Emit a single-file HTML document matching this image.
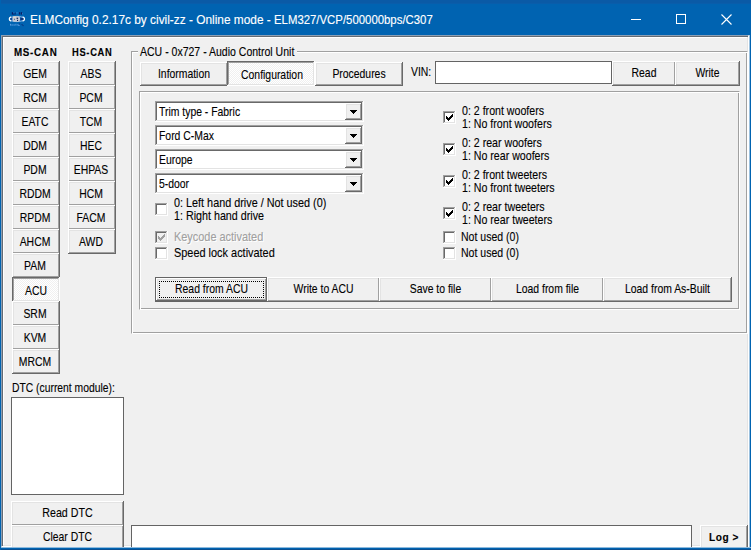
<!DOCTYPE html>
<html><head><meta charset="utf-8"><title>ELMConfig</title>
<style>
html,body{margin:0;padding:0}
body{width:751px;height:550px;overflow:hidden;position:relative;background:#F0F0F0;font-family:"Liberation Sans",sans-serif;color:#000}
.abs,.t,.btn,.etched,.sunken,.edit,.list,.focus{position:absolute;box-sizing:border-box}
.t{white-space:nowrap;display:block;-webkit-text-stroke:.12px currentColor}
.titlebar{position:absolute;left:0;top:0;width:751px;height:35px;background:#0063B1}
.topshade{position:absolute;left:0;top:0;width:751px;height:4px;background:linear-gradient(#0A5AA6,#0A5AA6 3px,#0860AE 4px)}
.client{position:absolute;left:1px;top:35px;width:748px;height:512px;box-sizing:border-box;background:#F0F0F0;border:1px solid;border-color:#8C9FB4 #fff #fff #8C9FB4;box-shadow:inset 1px 1px 0 #646B73, inset -1px -1px 0 #E3E3E3, inset 2px 2px 0 #fff}
.e{position:absolute;background:linear-gradient(var(--f),var(--f)) 2px 2px/calc(100% - 4px) calc(100% - 4px) no-repeat,linear-gradient(var(--t2),var(--t2)) 1px 1px/calc(100% - 3px) calc(100% - 3px) no-repeat,linear-gradient(var(--b2),var(--b2)) 1px 1px/calc(100% - 2px) calc(100% - 2px) no-repeat,linear-gradient(var(--t1),var(--t1)) 0 0/calc(100% - 1px) calc(100% - 1px) no-repeat,var(--b1)}
.raised{--f:#F0F0F0;--t1:#FFFFFF;--t2:#E3E3E3;--b1:#696969;--b2:#A0A0A0}
.pressed{--f:#F8F8F8;--t1:#696969;--t2:#A0A0A0;--b1:#FFFFFF;--b2:#E3E3E3}
.sunken{--f:#fff;--t1:#A0A0A0;--t2:#696969;--b1:#FFFFFF;--b2:#E3E3E3}
.sunken.dis{--f:#F0F0F0}
.focus{border:1px dotted #000}
.chk{background:conic-gradient(#F0F0F0 0 25%,#fff 0 50%,#F0F0F0 0 75%,#fff 0) 0 0/2px 2px}
.etched{border:1px solid;border-color:#A0A0A0 #FFFFFF #FFFFFF #A0A0A0;box-shadow:inset 1px 1px 0 #FFFFFF, inset -1px -1px 0 #A0A0A0}
.edit{background:#fff;border:1px solid #646464}
.list{background:#fff;border:1px solid #646464}
.frame-b{position:absolute;left:0;top:547px;width:751px;height:3px;background:linear-gradient(#8FBADD 0,#8FBADD 1px,#0063B1 1px)}
.frame-b2{position:absolute;left:0;top:549px;width:751px;height:1px;background:#0A4E90}
.frame-l{position:absolute;left:0;top:0;width:1px;height:550px;background:#0063B1}
.frame-r{position:absolute;left:749px;top:35px;width:2px;height:512px;background:linear-gradient(90deg,#9CC2E0 0,#9CC2E0 1px,#0063B1 1px)}
</style></head>
<body>
<div class="titlebar"></div>
<div class="topshade"></div>
<svg class="abs" style="left:8px;top:10px" width="18" height="18" viewBox="0 0 18 18">
<g fill="#0B1F66"><rect x="3.8" y="2.2" width="1.5" height="2.4"/><rect x="6.6" y="2.6" width="1" height="2"/><rect x="10.9" y="2.2" width="1.3" height="2.4"/><rect x="12.8" y="2.2" width="1.3" height="2.4"/><rect x="5.3" y="3.9" width="1" height=".8"/></g>
<g fill="#3C86D4" opacity=".8"><rect x="5.4" y="2.2" width="1" height="1"/><rect x="8" y="2.4" width="2.4" height="1"/><rect x="14.2" y="3" width=".8" height="1.4"/></g>
<ellipse cx="8.9" cy="9" rx="7.6" ry="2.6" fill="#0E5AAE" stroke="#8FBDEA" stroke-width=".9"/>
<path d="M3.2 6.9C.6 7.6.6 10.4 3.2 11.1M14.6 6.9c2.6.7 2.6 3.500 0 4.200" fill="none" stroke="#fff" stroke-width="1.2"/>
<rect x="4.4" y="6.3" width="7.6" height="5.4" rx="1.6" fill="#C4CAD4"/>
<rect x="5" y="6.6" width="3" height="1.2" fill="#EADCC8" opacity=".8"/>
<g fill="#101E58"><rect x="8.6" y="7.7" width="1.5" height="1.2"/><rect x="9" y="9.8" width="1.1" height="1.2"/><rect x="6" y="8.8" width="1" height=".9" opacity=".7"/><rect x="12.6" y="8.4" width="2.8" height="1.2"/><rect x="2.3" y="8.6" width="1.6" height=".8" opacity=".6"/></g>
<g fill="#5A9EE0"><rect x="2" y="13.8" width="1" height="1.8"/><rect x="3.4" y="14.4" width="1.4" height="1.2"/><rect x="5.4" y="14.4" width="1.4" height="1.2"/><rect x="7.4" y="13.8" width=".9" height="1.8"/><rect x="8.8" y="14" width=".8" height="1.6"/><rect x="10.2" y="14.4" width="1.4" height="1.6"/></g>
<g fill="#0B1F66"><rect x="11.2" y="13.6" width=".9" height=".9"/><rect x="13.6" y="14.2" width=".9" height=".9"/><rect x="14.6" y="15.2" width=".9" height=".9"/></g>
</svg>
<span class="t " style="left:30px;top:13px;font-size:12px;line-height:14px;transform:scaleX(0.989);transform-origin:0 0;color:#fff;">ELMConfig 0.2.17c by civil-zz - Online mode -</span>
<span class="t " style="left:274px;top:13px;font-size:12px;line-height:14px;transform:scaleX(0.948);transform-origin:0 0;color:#fff;">ELM327/VCP/500000bps/C307</span>
<svg class="abs" style="left:626px;top:9px" width="20" height="20" viewBox="0 0 20 20"><path d="M5 10.5h10" stroke="#fff" stroke-width="1"/></svg>
<svg class="abs" style="left:671px;top:9px" width="20" height="20" viewBox="0 0 20 20"><rect x="5.5" y="5.5" width="9" height="9" fill="none" stroke="#fff" stroke-width="1"/></svg>
<svg class="abs" style="left:716px;top:9px" width="20" height="20" viewBox="0 0 20 20"><path d="M5.5 5.5l10 10M15.5 5.5l-10 10" stroke="#fff" stroke-width="1.1"/></svg>
<div class="client"></div>
<span class="t " style="left:13.5px;top:46px;font-size:11px;line-height:13px;transform:scaleX(0.89);transform-origin:0 0;font-weight:bold;letter-spacing:.8px;">MS-CAN</span>
<span class="t " style="left:71.5px;top:46px;font-size:11px;line-height:13px;transform:scaleX(0.85);transform-origin:0 0;font-weight:bold;letter-spacing:.8px;">HS-CAN</span>
<div class="e raised" style="left:12px;top:61px;width:48px;height:25px"></div>
<span class="t" style="left:11px;width:48px;top:66px;font-size:13px;line-height:15px;text-align:center;transform:scaleX(0.8);transform-origin:50% 0;">GEM</span>
<div class="e raised" style="left:12px;top:85px;width:48px;height:25px"></div>
<span class="t" style="left:11px;width:48px;top:90px;font-size:13px;line-height:15px;text-align:center;transform:scaleX(0.8);transform-origin:50% 0;">RCM</span>
<div class="e raised" style="left:12px;top:109px;width:48px;height:25px"></div>
<span class="t" style="left:11px;width:48px;top:114px;font-size:13px;line-height:15px;text-align:center;transform:scaleX(0.8);transform-origin:50% 0;">EATC</span>
<div class="e raised" style="left:12px;top:133px;width:48px;height:25px"></div>
<span class="t" style="left:11px;width:48px;top:138px;font-size:13px;line-height:15px;text-align:center;transform:scaleX(0.8);transform-origin:50% 0;">DDM</span>
<div class="e raised" style="left:12px;top:157px;width:48px;height:25px"></div>
<span class="t" style="left:11px;width:48px;top:162px;font-size:13px;line-height:15px;text-align:center;transform:scaleX(0.8);transform-origin:50% 0;">PDM</span>
<div class="e raised" style="left:12px;top:181px;width:48px;height:25px"></div>
<span class="t" style="left:11px;width:48px;top:186px;font-size:13px;line-height:15px;text-align:center;transform:scaleX(0.8);transform-origin:50% 0;">RDDM</span>
<div class="e raised" style="left:12px;top:205px;width:48px;height:25px"></div>
<span class="t" style="left:11px;width:48px;top:210px;font-size:13px;line-height:15px;text-align:center;transform:scaleX(0.8);transform-origin:50% 0;">RPDM</span>
<div class="e raised" style="left:12px;top:229px;width:48px;height:25px"></div>
<span class="t" style="left:11px;width:48px;top:234px;font-size:13px;line-height:15px;text-align:center;transform:scaleX(0.8);transform-origin:50% 0;">AHCM</span>
<div class="e raised" style="left:12px;top:253px;width:48px;height:25px"></div>
<span class="t" style="left:11px;width:48px;top:258px;font-size:13px;line-height:15px;text-align:center;transform:scaleX(0.8);transform-origin:50% 0;">PAM</span>
<div class="e pressed" style="left:12px;top:277px;width:48px;height:25px"></div>
<div class="abs chk" style="left:14px;top:279px;width:44px;height:21px"></div>
<span class="t" style="left:12px;width:48px;top:283px;font-size:13px;line-height:15px;text-align:center;transform:scaleX(0.8);transform-origin:50% 0;">ACU</span>
<div class="e raised" style="left:12px;top:301px;width:48px;height:25px"></div>
<span class="t" style="left:11px;width:48px;top:306px;font-size:13px;line-height:15px;text-align:center;transform:scaleX(0.8);transform-origin:50% 0;">SRM</span>
<div class="e raised" style="left:12px;top:325px;width:48px;height:25px"></div>
<span class="t" style="left:11px;width:48px;top:330px;font-size:13px;line-height:15px;text-align:center;transform:scaleX(0.8);transform-origin:50% 0;">KVM</span>
<div class="e raised" style="left:12px;top:349px;width:48px;height:25px"></div>
<span class="t" style="left:11px;width:48px;top:354px;font-size:13px;line-height:15px;text-align:center;transform:scaleX(0.8);transform-origin:50% 0;">MRCM</span>
<div class="e raised" style="left:68px;top:61px;width:48px;height:25px"></div>
<span class="t" style="left:67px;width:48px;top:66px;font-size:13px;line-height:15px;text-align:center;transform:scaleX(0.8);transform-origin:50% 0;">ABS</span>
<div class="e raised" style="left:68px;top:85px;width:48px;height:25px"></div>
<span class="t" style="left:67px;width:48px;top:90px;font-size:13px;line-height:15px;text-align:center;transform:scaleX(0.8);transform-origin:50% 0;">PCM</span>
<div class="e raised" style="left:68px;top:109px;width:48px;height:25px"></div>
<span class="t" style="left:67px;width:48px;top:114px;font-size:13px;line-height:15px;text-align:center;transform:scaleX(0.8);transform-origin:50% 0;">TCM</span>
<div class="e raised" style="left:68px;top:133px;width:48px;height:25px"></div>
<span class="t" style="left:67px;width:48px;top:138px;font-size:13px;line-height:15px;text-align:center;transform:scaleX(0.8);transform-origin:50% 0;">HEC</span>
<div class="e raised" style="left:68px;top:157px;width:48px;height:25px"></div>
<span class="t" style="left:67px;width:48px;top:162px;font-size:13px;line-height:15px;text-align:center;transform:scaleX(0.8);transform-origin:50% 0;">EHPAS</span>
<div class="e raised" style="left:68px;top:181px;width:48px;height:25px"></div>
<span class="t" style="left:67px;width:48px;top:186px;font-size:13px;line-height:15px;text-align:center;transform:scaleX(0.8);transform-origin:50% 0;">HCM</span>
<div class="e raised" style="left:68px;top:205px;width:48px;height:25px"></div>
<span class="t" style="left:67px;width:48px;top:210px;font-size:13px;line-height:15px;text-align:center;transform:scaleX(0.8);transform-origin:50% 0;">FACM</span>
<div class="e raised" style="left:68px;top:229px;width:48px;height:25px"></div>
<span class="t" style="left:67px;width:48px;top:234px;font-size:13px;line-height:15px;text-align:center;transform:scaleX(0.8);transform-origin:50% 0;">AWD</span>
<span class="t " style="left:11.5px;top:380px;font-size:13px;line-height:15px;transform:scaleX(0.795);transform-origin:0 0;">DTC (current module):</span>
<div class="list" style="left:11px;top:397px;width:113px;height:98px"></div>
<div class="e raised" style="left:11px;top:501px;width:113px;height:25px"></div>
<span class="t" style="left:11px;width:113px;top:505px;font-size:13px;line-height:15px;text-align:center;transform:scaleX(0.82);transform-origin:50% 0;">Read DTC</span>
<div class="e raised" style="left:11px;top:525px;width:113px;height:25px"></div>
<span class="t" style="left:11px;width:113px;top:529px;font-size:13px;line-height:15px;text-align:center;transform:scaleX(0.8);transform-origin:50% 0;">Clear DTC</span>
<div class="etched" style="left:131px;top:51px;width:617px;height:283px"></div>
<div class="abs" style="left:138px;top:46px;width:159px;height:12px;background:#F0F0F0"></div>
<span class="t " style="left:140px;top:44px;font-size:13px;line-height:15px;transform:scaleX(0.809);transform-origin:0 0;">ACU - 0x727 - Audio Control Unit</span>
<div class="e raised" style="left:140px;top:62px;width:88px;height:24px"></div>
<span class="t" style="left:139.5px;width:88px;top:66px;font-size:13px;line-height:15px;text-align:center;transform:scaleX(0.8);transform-origin:50% 0;">Information</span>
<div class="e pressed" style="left:227px;top:61px;width:88px;height:25px"></div>
<div class="abs chk" style="left:229px;top:63px;width:84px;height:21px"></div>
<span class="t" style="left:228px;width:88px;top:67px;font-size:13px;line-height:15px;text-align:center;transform:scaleX(0.8);transform-origin:50% 0;">Configuration</span>
<div class="e raised" style="left:315px;top:62px;width:88px;height:24px"></div>
<span class="t" style="left:315px;width:88px;top:66px;font-size:13px;line-height:15px;text-align:center;transform:scaleX(0.8);transform-origin:50% 0;">Procedures</span>
<span class="t " style="left:411px;top:64px;font-size:13px;line-height:15px;transform:scaleX(0.8);transform-origin:0 0;">VIN:</span>
<div class="edit" style="left:435px;top:61px;width:177px;height:23px"></div>
<div class="e raised" style="left:612px;top:61px;width:64px;height:25px"></div>
<span class="t" style="left:611.5px;width:64px;top:65px;font-size:13px;line-height:15px;text-align:center;transform:scaleX(0.8);transform-origin:50% 0;">Read</span>
<div class="e raised" style="left:675px;top:61px;width:65px;height:25px"></div>
<span class="t" style="left:675px;width:65px;top:65px;font-size:13px;line-height:15px;text-align:center;transform:scaleX(0.8);transform-origin:50% 0;">Write</span>
<div class="etched" style="left:139px;top:91px;width:601px;height:219px"></div>
<div class="e sunken" style="left:155px;top:101px;width:209px;height:21px"></div>
<div class="e raised" style="left:345px;top:103px;width:17px;height:17px"></div>
<svg class="abs" style="left:350px;top:110px" width="7" height="4" viewBox="0 0 7 4"><path shape-rendering="crispEdges" d="M0 0h7v1h-7zM1 1h5v1h-5zM2 2h3v1h-3zM3 3h1v1h-1z" fill="#000"/></svg>
<span class="t " style="left:159px;top:104px;font-size:13px;line-height:15px;transform:scaleX(0.8);transform-origin:0 0;">Trim type - Fabric</span>
<div class="e sunken" style="left:155px;top:125px;width:209px;height:21px"></div>
<div class="e raised" style="left:345px;top:127px;width:17px;height:17px"></div>
<svg class="abs" style="left:350px;top:134px" width="7" height="4" viewBox="0 0 7 4"><path shape-rendering="crispEdges" d="M0 0h7v1h-7zM1 1h5v1h-5zM2 2h3v1h-3zM3 3h1v1h-1z" fill="#000"/></svg>
<span class="t " style="left:159px;top:128px;font-size:13px;line-height:15px;transform:scaleX(0.8);transform-origin:0 0;">Ford C-Max</span>
<div class="e sunken" style="left:155px;top:149px;width:209px;height:21px"></div>
<div class="e raised" style="left:345px;top:151px;width:17px;height:17px"></div>
<svg class="abs" style="left:350px;top:158px" width="7" height="4" viewBox="0 0 7 4"><path shape-rendering="crispEdges" d="M0 0h7v1h-7zM1 1h5v1h-5zM2 2h3v1h-3zM3 3h1v1h-1z" fill="#000"/></svg>
<span class="t " style="left:159px;top:152px;font-size:13px;line-height:15px;transform:scaleX(0.8);transform-origin:0 0;">Europe</span>
<div class="e sunken" style="left:155px;top:173px;width:209px;height:21px"></div>
<div class="e raised" style="left:345px;top:175px;width:17px;height:17px"></div>
<svg class="abs" style="left:350px;top:182px" width="7" height="4" viewBox="0 0 7 4"><path shape-rendering="crispEdges" d="M0 0h7v1h-7zM1 1h5v1h-5zM2 2h3v1h-3zM3 3h1v1h-1z" fill="#000"/></svg>
<span class="t " style="left:159px;top:176px;font-size:13px;line-height:15px;transform:scaleX(0.8);transform-origin:0 0;">5-door</span>
<div class="e sunken" style="left:155px;top:203px;width:13px;height:13px"></div>
<span class="t " style="left:174px;top:195px;font-size:13px;line-height:15px;transform:scaleX(0.833);transform-origin:0 0;">0: Left hand drive / Not used (0)</span>
<span class="t " style="left:174px;top:208px;font-size:13px;line-height:15px;transform:scaleX(0.825);transform-origin:0 0;">1: Right hand drive</span>
<div class="e sunken dis" style="left:155px;top:231px;width:13px;height:13px"></div>
<svg class="abs" style="left:158px;top:234px" width="7" height="7" viewBox="0 0 7 7"><path shape-rendering="crispEdges" d="M0 2h1v3h-1zM1 3h1v3h-1zM2 4h1v3h-1zM3 3h1v3h-1zM4 2h1v3h-1zM5 1h1v3h-1zM6 0h1v3h-1z" fill="#A0A0A0"/></svg>
<span class="t " style="left:174.5px;top:230px;font-size:13px;line-height:15px;transform:scaleX(0.84);transform-origin:0 0;color:#fff;">Keycode activated</span>
<span class="t " style="left:173.5px;top:229px;font-size:13px;line-height:15px;transform:scaleX(0.84);transform-origin:0 0;color:#A0A0A0;">Keycode activated</span>
<div class="e sunken" style="left:155px;top:247px;width:13px;height:13px"></div>
<span class="t " style="left:173.5px;top:245px;font-size:13px;line-height:15px;transform:scaleX(0.84);transform-origin:0 0;">Speed lock activated</span>
<div class="e sunken" style="left:443px;top:111px;width:13px;height:13px"></div>
<svg class="abs" style="left:446px;top:114px" width="7" height="7" viewBox="0 0 7 7"><path shape-rendering="crispEdges" d="M0 2h1v3h-1zM1 3h1v3h-1zM2 4h1v3h-1zM3 3h1v3h-1zM4 2h1v3h-1zM5 1h1v3h-1zM6 0h1v3h-1z" fill="#000"/></svg>
<span class="t " style="left:461.5px;top:103px;font-size:13px;line-height:15px;transform:scaleX(0.817);transform-origin:0 0;">0: 2 front woofers</span>
<span class="t " style="left:461.5px;top:116px;font-size:13px;line-height:15px;transform:scaleX(0.817);transform-origin:0 0;">1: No front woofers</span>
<div class="e sunken" style="left:443px;top:143px;width:13px;height:13px"></div>
<svg class="abs" style="left:446px;top:146px" width="7" height="7" viewBox="0 0 7 7"><path shape-rendering="crispEdges" d="M0 2h1v3h-1zM1 3h1v3h-1zM2 4h1v3h-1zM3 3h1v3h-1zM4 2h1v3h-1zM5 1h1v3h-1zM6 0h1v3h-1z" fill="#000"/></svg>
<span class="t " style="left:461.5px;top:135px;font-size:13px;line-height:15px;transform:scaleX(0.817);transform-origin:0 0;">0: 2 rear woofers</span>
<span class="t " style="left:461.5px;top:148px;font-size:13px;line-height:15px;transform:scaleX(0.817);transform-origin:0 0;">1: No rear woofers</span>
<div class="e sunken" style="left:443px;top:175px;width:13px;height:13px"></div>
<svg class="abs" style="left:446px;top:178px" width="7" height="7" viewBox="0 0 7 7"><path shape-rendering="crispEdges" d="M0 2h1v3h-1zM1 3h1v3h-1zM2 4h1v3h-1zM3 3h1v3h-1zM4 2h1v3h-1zM5 1h1v3h-1zM6 0h1v3h-1z" fill="#000"/></svg>
<span class="t " style="left:461.5px;top:167px;font-size:13px;line-height:15px;transform:scaleX(0.817);transform-origin:0 0;">0: 2 front tweeters</span>
<span class="t " style="left:461.5px;top:180px;font-size:13px;line-height:15px;transform:scaleX(0.817);transform-origin:0 0;">1: No front tweeters</span>
<div class="e sunken" style="left:443px;top:207px;width:13px;height:13px"></div>
<svg class="abs" style="left:446px;top:210px" width="7" height="7" viewBox="0 0 7 7"><path shape-rendering="crispEdges" d="M0 2h1v3h-1zM1 3h1v3h-1zM2 4h1v3h-1zM3 3h1v3h-1zM4 2h1v3h-1zM5 1h1v3h-1zM6 0h1v3h-1z" fill="#000"/></svg>
<span class="t " style="left:461.5px;top:199px;font-size:13px;line-height:15px;transform:scaleX(0.817);transform-origin:0 0;">0: 2 rear tweeters</span>
<span class="t " style="left:461.5px;top:212px;font-size:13px;line-height:15px;transform:scaleX(0.817);transform-origin:0 0;">1: No rear tweeters</span>
<div class="e sunken" style="left:443px;top:231px;width:13px;height:13px"></div>
<span class="t " style="left:461px;top:229px;font-size:13px;line-height:15px;transform:scaleX(0.81);transform-origin:0 0;">Not used (0)</span>
<div class="e sunken" style="left:443px;top:247px;width:13px;height:13px"></div>
<span class="t " style="left:461px;top:245px;font-size:13px;line-height:15px;transform:scaleX(0.81);transform-origin:0 0;">Not used (0)</span>
<div class="abs" style="left:155px;top:277px;width:113px;height:25px;background:#646464"></div>
<div class="e raised" style="left:156px;top:278px;width:111px;height:23px"></div>
<div class="focus" style="left:159px;top:281px;width:105px;height:17px"></div>
<span class="t" style="left:155px;width:113px;top:281px;font-size:13px;line-height:15px;text-align:center;transform:scaleX(0.8);transform-origin:50% 0;">Read from ACU</span>
<div class="e raised" style="left:267px;top:277px;width:113px;height:25px"></div>
<span class="t" style="left:267px;width:113px;top:281px;font-size:13px;line-height:15px;text-align:center;transform:scaleX(0.8);transform-origin:50% 0;">Write to ACU</span>
<div class="e raised" style="left:379px;top:277px;width:113px;height:25px"></div>
<span class="t" style="left:379px;width:113px;top:281px;font-size:13px;line-height:15px;text-align:center;transform:scaleX(0.8);transform-origin:50% 0;">Save to file</span>
<div class="e raised" style="left:491px;top:277px;width:113px;height:25px"></div>
<span class="t" style="left:491px;width:113px;top:281px;font-size:13px;line-height:15px;text-align:center;transform:scaleX(0.8);transform-origin:50% 0;">Load from file</span>
<div class="e raised" style="left:603px;top:277px;width:129px;height:25px"></div>
<span class="t" style="left:603px;width:129px;top:281px;font-size:13px;line-height:15px;text-align:center;transform:scaleX(0.8);transform-origin:50% 0;">Load from As-Built</span>
<div class="edit" style="left:131px;top:525px;width:561px;height:24px"></div>
<div class="e raised" style="left:700px;top:525px;width:48px;height:25px"></div>
<span class="t" style="left:699.5px;width:48px;top:531px;font-size:11px;line-height:13px;text-align:center;transform:scaleX(0.92);transform-origin:50% 0;font-weight:bold;letter-spacing:0.6px;">Log &gt;</span>
<div class="frame-b"></div><div class="frame-b2"></div><div class="frame-l"></div><div class="frame-r"></div>
</body></html>
